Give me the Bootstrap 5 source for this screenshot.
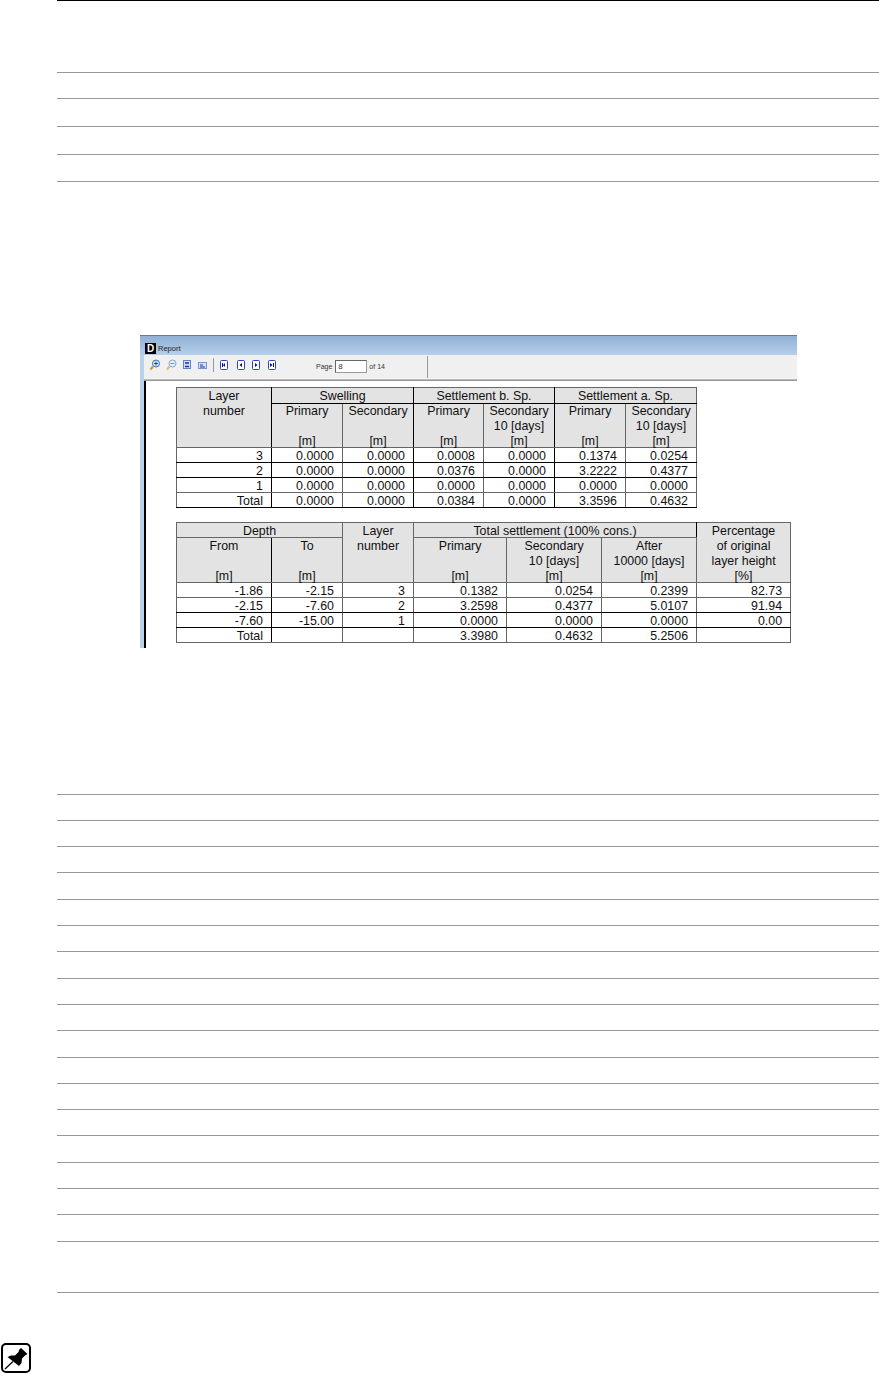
<!DOCTYPE html>
<html lang="en">
<head>
<meta charset="utf-8">
<title>Report</title>
<link rel="stylesheet" href="https://cdn.jsdelivr.net/npm/bootstrap@5.3.0/dist/css/bootstrap.min.css">
<style>
html,body{margin:0;background:#fff;overflow:hidden;height:1374px}
body{font-family:"Liberation Sans",Arial,sans-serif;color:#000}
.rules{margin-left:57px}
.rl{border-bottom:1px solid #999;box-sizing:border-box}
.top-rule{height:73px;border-top:1px solid #000}
.h26{height:26px}.h27{height:27px}.h28{height:28px}.h51{height:51px}.h147{height:147px}
.shot{margin:153px 82px 0 140px;height:313px;border-top:1px solid #777;background:#b9d1ea}
.tbar{height:19px;background:linear-gradient(#90b0d4,#b6cfea);font-size:7.5px;line-height:12px;color:#222;padding:6px 0 0 5px}
.dlogo{width:11px;height:11px;background:#000;color:#fff;font:bold 10px/11px "Liberation Sans",sans-serif;text-align:center;margin-right:2px}
.sidebar{width:4px;background:#b9d1ea;flex:none}
.tools{height:23px;background:#f0f0f0;margin-left:4px;font-size:7px;color:#333}
.ic-first{margin-left:4px}
.sep-s{width:1px;height:14px;background:#9a9a9a;margin-top:-3px}
.sep-l{width:1px;height:22px;background:#9a9a9a;margin-left:42px}
.pg-lbl{margin-left:26px}
.t-low{padding-top:2px}
.pg-in{width:32px;height:13px;border:1px solid #999;border-top-color:#666;border-left-color:#666;background:#fff;font-size:8px;line-height:11px;padding-left:2px;margin:0 2px 0 3px}
.sep-lines{height:3px;margin-left:4px;background:#bbb;border-bottom:1px solid #999;border-top:1px solid #f4f4f4}
.body-area{height:267px;overflow:hidden}
.page-area{border-left:2px solid #000;padding:6px 0 0 30px;flex:1;background:#fff}
.rpt{border-collapse:collapse;table-layout:fixed;font-size:12.4px;line-height:14px;color:#111}
.rpt td,.rpt th{border:1px solid #666;padding:0 8px;font-weight:400;white-space:nowrap}
.rpt td{padding-top:2px;line-height:12px}
.rpt th{background:#e3e3e3;text-align:center;vertical-align:top;padding:0}
.rpt .kr{border-right-color:#000}
.rpt .kb td,.rpt th.kb{border-bottom-color:#000}
.stk{line-height:15px;height:43px}
.tb2 .stk{padding-top:1px;box-sizing:border-box}
.st-a{line-height:15px;height:15px;padding-top:1px;box-sizing:border-box}
.st-b{line-height:15px;height:14px;padding-top:1px;box-sizing:border-box}
.st-tall{line-height:15px;height:59px;padding-top:1px;box-sizing:border-box}
.tb1{width:521px;margin-bottom:14px}
.tb2{width:615px}
.c95{width:95px}.c71{width:71px}.c70{width:70px}.c94{width:94px}.c93{width:93px}
.pin-row{margin:50px 0 0 1px;height:31px}
.pinbox{width:30px;height:30px;display:block}
</style>
</head>
<body>
<div class="rules">
  <div class="rl top-rule"></div>
  <div class="rl h26"></div>
  <div class="rl h28"></div>
  <div class="rl h28"></div>
  <div class="rl h27"></div>
</div>

<div class="shot">
  <div class="tbar d-flex align-items-center"><span class="dlogo">D</span><span>Report</span></div>
  <div class="tools d-flex align-items-center">
    <svg width="65" height="23" viewBox="0 0 65 23" class="ic-first">
      <g fill="none">
        <circle cx="8" cy="8.500" r="3.500" fill="#dcebfa" stroke="#3a6fb0"/><path d="M5 11.500L2.500 14.500" stroke="#c89a30" stroke-width="2"/><path d="M6 8.500h4M8 6.500v4" stroke="#1d4f9a"/>
        <circle cx="24.500" cy="8.500" r="3.500" fill="#e8f1fb" stroke="#86a8d0"/><path d="M21.500 11.500L19 14.500" stroke="#d8bb70" stroke-width="2"/><path d="M22.500 8.500h4" stroke="#6a8fc0"/>
        <rect x="35.500" y="5.500" width="7" height="8" fill="#cfe0f6" stroke="#5f86c4"/><path d="M37 8h4M37 11.500h4" stroke="#1c2f9c" stroke-width="1.500"/>
        <rect x="50.500" y="7.500" width="8" height="6" fill="#d5e5f8" stroke="#7397cc"/><path d="M52 10h3M52 12h5" stroke="#1c2f9c"/>
      </g>
    </svg>
    <span class="sep-s"></span>
    <svg width="72" height="23" viewBox="0 0 72 23" class="ms-1">
      <g fill="#fff" stroke="#2b3fd0">
        <rect x="2.500" y="5.500" width="7" height="9" rx="1"/><rect x="19.500" y="5.500" width="7" height="9" rx="1"/><rect x="34.500" y="5.500" width="7" height="9" rx="1"/><rect x="50.500" y="5.500" width="7" height="9" rx="1"/>
      </g>
      <g fill="#101060">
        <path d="M7 8v4L5 10zM4 8h1v4H4z"/><path d="M24 8v4l-2.500-2z"/><path d="M37 8v4l2.500-2z"/><path d="M52 8v4l2.500-2zM55 8h1v4h-1z"/>
      </g>
    </svg>
    <span class="pg-lbl t-low">Page</span>
    <span class="pg-in">8</span>
    <span class="t-low">of 14</span>
    <span class="sep-l"></span>
  </div>
  <div class="sep-lines"></div>
  <div class="d-flex body-area">
    <div class="sidebar"></div>
    <div class="page-area">
      <table class="rpt tb1">
        <colgroup><col class="c95"><col class="c71"><col class="c71"><col class="c70"><col class="c71"><col class="c71"><col class="c71"></colgroup>
        <thead>
          <tr>
            <th rowspan="2" class="kr"><div class="st-tall">Layer<br>number</div></th>
            <th colspan="2" class="kr kb"><div class="st-a">Swelling</div></th>
            <th colspan="2" class="kr kb"><div class="st-a">Settlement b. Sp.</div></th>
            <th colspan="2" class="kb"><div class="st-a">Settlement a. Sp.</div></th>
          </tr>
          <tr>
            <th><div class="stk">Primary<br>&nbsp;<br>[m]</div></th>
            <th class="kr"><div class="stk">Secondary<br>&nbsp;<br>[m]</div></th>
            <th><div class="stk">Primary<br>&nbsp;<br>[m]</div></th>
            <th class="kr"><div class="stk">Secondary<br>10 [days]<br>[m]</div></th>
            <th><div class="stk">Primary<br>&nbsp;<br>[m]</div></th>
            <th><div class="stk">Secondary<br>10 [days]<br>[m]</div></th>
          </tr>
        </thead>
        <tbody>
          <tr class="kb"><td class="text-end kr">3</td><td class="text-end">0.0000</td><td class="text-end kr">0.0000</td><td class="text-end">0.0008</td><td class="text-end kr">0.0000</td><td class="text-end">0.1374</td><td class="text-end">0.0254</td></tr>
          <tr class="kb"><td class="text-end kr">2</td><td class="text-end">0.0000</td><td class="text-end kr">0.0000</td><td class="text-end">0.0376</td><td class="text-end kr">0.0000</td><td class="text-end">3.2222</td><td class="text-end">0.4377</td></tr>
          <tr><td class="text-end kr">1</td><td class="text-end">0.0000</td><td class="text-end kr">0.0000</td><td class="text-end">0.0000</td><td class="text-end kr">0.0000</td><td class="text-end">0.0000</td><td class="text-end">0.0000</td></tr>
          <tr class="kb"><td class="text-end kr">Total</td><td class="text-end">0.0000</td><td class="text-end kr">0.0000</td><td class="text-end">0.0384</td><td class="text-end kr">0.0000</td><td class="text-end">3.3596</td><td class="text-end">0.4632</td></tr>
        </tbody>
      </table>
      <table class="rpt tb2">
        <colgroup><col class="c95"><col class="c71"><col class="c71"><col class="c93"><col class="c95"><col class="c95"><col class="c94"></colgroup>
        <thead>
          <tr>
            <th colspan="2"><div class="st-b">Depth</div></th>
            <th rowspan="2"><div class="st-tall">Layer<br>number</div></th>
            <th colspan="3" class="kr"><div class="st-b">Total settlement (100% cons.)</div></th>
            <th rowspan="2"><div class="st-tall">Percentage<br>of original<br>layer height<br>[%]</div></th>
          </tr>
          <tr>
            <th class="kr"><div class="stk">From<br>&nbsp;<br>[m]</div></th>
            <th><div class="stk">To<br>&nbsp;<br>[m]</div></th>
            <th><div class="stk">Primary<br>&nbsp;<br>[m]</div></th>
            <th><div class="stk">Secondary<br>10 [days]<br>[m]</div></th>
            <th class="kr"><div class="stk">After<br>10000 [days]<br>[m]</div></th>
          </tr>
        </thead>
        <tbody>
          <tr><td class="text-end kr">-1.86</td><td class="text-end">-2.15</td><td class="text-end">3</td><td class="text-end">0.1382</td><td class="text-end">0.0254</td><td class="text-end">0.2399</td><td class="text-end">82.73</td></tr>
          <tr class="kb"><td class="text-end kr">-2.15</td><td class="text-end">-7.60</td><td class="text-end">2</td><td class="text-end">3.2598</td><td class="text-end">0.4377</td><td class="text-end">5.0107</td><td class="text-end">91.94</td></tr>
          <tr class="kb"><td class="text-end kr">-7.60</td><td class="text-end">-15.00</td><td class="text-end">1</td><td class="text-end">0.0000</td><td class="text-end">0.0000</td><td class="text-end">0.0000</td><td class="text-end">0.00</td></tr>
          <tr><td class="text-end kr">Total</td><td></td><td></td><td class="text-end">3.3980</td><td class="text-end">0.4632</td><td class="text-end">5.2506</td><td></td></tr>
        </tbody>
      </table>
    </div>
  </div>
</div>

<div class="rules">
  <div class="rl h147"></div>
  <div class="rl h26"></div><div class="rl h26"></div><div class="rl h26"></div><div class="rl h27"></div>
  <div class="rl h26"></div><div class="rl h26"></div><div class="rl h27"></div><div class="rl h26"></div>
  <div class="rl h26"></div><div class="rl h27"></div><div class="rl h26"></div><div class="rl h26"></div>
  <div class="rl h26"></div><div class="rl h27"></div><div class="rl h26"></div><div class="rl h26"></div>
  <div class="rl h27"></div><div class="rl h51"></div>
</div>

<div class="pin-row">
  <svg class="pinbox" viewBox="0 0 30 30">
    <rect x="1" y="1" width="28" height="28" rx="4" fill="#fff" stroke="#000" stroke-width="2"/>
    <path d="M4 26L12 18.500" stroke="#000" stroke-width="1.200"/>
    <path d="M20 5L26.500 11L24 12.500L21 15.500L20.500 20L18 23L6.500 14L10 12.500L14 12.500L17.500 9L18 7z" fill="#000"/>
  </svg>
</div>
</body>
</html>
